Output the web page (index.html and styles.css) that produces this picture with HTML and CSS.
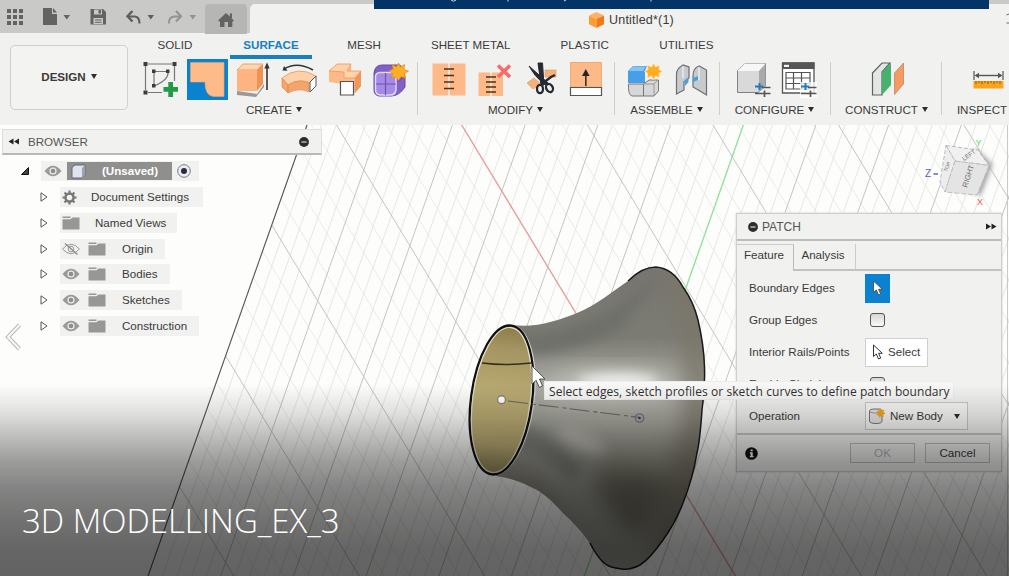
FILE: index.html
```html
<!DOCTYPE html>
<html lang="en">
<head>
<meta charset="utf-8">
<title>Untitled*(1)</title>
<link rel="stylesheet" href="styles.css">
</head>
<body>
<svg class="defs" width="0" height="0">
  <defs>
    <symbol id="eye" viewBox="0 0 18 12"><path d="M0.5 6Q9 -4.500 17.500 6Q9 16.500 0.500 6Z" fill="#9a9a98"/><circle cx="9" cy="6" r="3.600" fill="#e9e9e7"/><circle cx="9" cy="6" r="2.300" fill="#8d8d8b"/></symbol>
    <symbol id="eye-off" viewBox="0 0 18 12"><path d="M0.500 6Q9 -3.500 17.500 6Q9 15.500 0.500 6Z" fill="none" stroke="#9a9a98"/><circle cx="9" cy="6" r="2.800" fill="none" stroke="#9a9a98"/><path d="M3 0.500L15.500 11.500" stroke="#8a8a88" stroke-width="1.300"/></symbol>
    <symbol id="folder" viewBox="0 0 18 14"><path d="M0.500 0.500H8.500V2H0.500ZM0.500 3.200H8.500L10.500 1.500H17.500V13.500H0.500Z" fill="#979795"/></symbol>
    <symbol id="twist" viewBox="0 0 8 10"><path d="M1 0.800L7 5L1 9.200Z" fill="#fff" stroke="#555" stroke-width="1"/></symbol>
    <symbol id="minus" viewBox="0 0 10 10"><circle cx="5" cy="5" r="4.900" fill="#2c2c2c"/><path d="M2.400 5H7.600" stroke="#cfcfcf" stroke-width="1.300"/></symbol>
    <symbol id="arrow" viewBox="0 0 12 16"><path d="M1.500 1V12.500L4.300 10L6.500 15L8.700 14L6.600 9.300H10.300Z"/></symbol>
  </defs>
</svg>
<div class="app">
  <header class="topbar">
    <svg class="ico" width="36" height="33" viewBox="0 0 36 33"><path d="M7 9h4v4h-4zM13 9h4v4h-4zM19 9h4v4h-4zM7 15h4v4h-4zM13 15h4v4h-4zM19 15h4v4h-4zM7 21h4v4h-4zM13 21h4v4h-4zM19 21h4v4h-4z" fill="#636363"/></svg>
    <svg class="ico" width="44" height="33" viewBox="36 0 44 33"><path d="M43 8H52V14H57V25H43ZM53 8L57 12.500H53Z" fill="#636363"/><path d="M63.500 15H70L66.800 19.500Z" fill="#636363"/></svg>
    <svg class="ico" width="36" height="33" viewBox="80 0 36 33"><path d="M90.500 9H103L106 12V24.500H90.500Z" fill="#636363"/><path d="M94 9.500H102V14.500H94Z" fill="#c8c8c8"/><path d="M98.500 10H101V13.500H98.500Z" fill="#636363"/><path d="M93.500 18H103V24H93.500Z" fill="#c8c8c8"/><path d="M95 20H101.500M95 22.300H101.500" stroke="#636363"/></svg>
    <svg class="ico" width="44" height="33" viewBox="116 0 44 33"><path d="M128 16.500H135Q139.500 17 139.500 23.500" fill="none" stroke="#5e5e5e" stroke-width="2.200"/><path d="M132.500 11L127.500 16.300L132.500 21.500" fill="none" stroke="#5e5e5e" stroke-width="2.400"/><path d="M147.500 15H154L150.800 19.500Z" fill="#5e5e5e"/></svg>
    <svg class="ico" width="45" height="33" viewBox="160 0 45 33"><path d="M181 16.500H174Q169 17 168.800 23.500" fill="none" stroke="#929292" stroke-width="1.900"/><path d="M176 11L181 16.300L176 21.500" fill="none" stroke="#929292" stroke-width="2.100"/><path d="M189.500 15H196L192.800 19.500Z" fill="#929292"/></svg>
    <div class="home"><svg class="ico" width="41" height="30" viewBox="205 4 41 30"><path d="M218 20.500L226 13L234 20.500L232.300 21.800V27H228V22H224.500V27H220V21.800Z" fill="#636363"/><path d="M229.800 13.500H232V18H229.800Z" fill="#636363"/></svg></div>
    <div class="doc">
      <svg width="17" height="18" viewBox="0 0 17 18"><path d="M8.500 1L16 4.500L8.500 8L1 4.500Z" fill="#ffb266"/><path d="M1 4.500L8.500 8V17L1 13.300Z" fill="#ff9a35"/><path d="M16 4.500L8.500 8V17L16 13.300Z" fill="#f17a16"/></svg>
      <span>Untitled*(1)</span>
    </div>
    <svg class="banner" width="615" height="9" viewBox="374 0 615 9"><path d="M374 0H989V9H374Z" fill="#023468"/><path d="M451 0Q453.500 2.500 456 0M508 0V1.500M564 1L566 0M651 0V1.500" stroke="#d5dfea" fill="none"/></svg>
    <svg class="edge" width="3" height="12" viewBox="0 0 3 12"><path d="M0.500 2L3 1M0.500 10H3" stroke="#666"/></svg>
  </header>

  <section class="ribbon">
    <button class="design">DESIGN<i class="caret"></i></button>
    <div class="main">
      <nav class="tabs"><span>SOLID</span><span class="on">SURFACE</span><span>MESH</span><span>SHEET METAL</span><span>PLASTIC</span><span>UTILITIES</span></nav>
      <div class="groups">
        <div class="group create">
          <div class="icons">
            <svg viewBox="136 59 46 41"><path d="M148 64H172M145.500 66V90M148 92.500H162M174.500 66V81" stroke="#777" fill="none" stroke-width="1.200"/><path d="M154 71.500H168Q169 80 154 86Z" fill="none" stroke="#777" stroke-width="1.200"/><path d="M143.500 62h4v4h-4zM172.500 62h4v4h-4zM143.500 90.500h4v4h-4zM152 69.500h3.500v3.500h-3.500zM166 69.500h3.500v3.500h-3.500zM152 84h3.500v3.500h-3.500z" fill="#3c3c3c"/><path d="M168.300 82H173V87H178V91.700H173V97H168.300V91.700H163.500V87H168.300Z" fill="#239a45"/></svg>
            <svg viewBox="182 59 46 41"><path d="M187 59H228V100H187Z" fill="#0b82cf"/><path d="M190.500 62.500H224V96.500H214Q205 96 205 82H190.500Z" fill="#fdbb89" stroke="#f2a56a" stroke-width=".6"/></svg>
            <svg viewBox="228 59 46 41"><path d="M237 91L257 94L264 84V87L256 97L237 95Z" fill="#999"/><path d="M237 70L243 64H263L257 70Z" fill="#ffd5b2" stroke="#e99557" stroke-width=".8"/><path d="M237 70H257V91H237Z" fill="#fdb481"/><path d="M257 70L263 64V84L257 91Z" fill="#ef9353"/><path d="M267 90V67" stroke="#333" stroke-width="1.600"/><path d="M264.300 68.500L267 62.500L269.700 68.500Z" fill="#333"/></svg>
            <svg viewBox="274 59 46 41"><path d="M284 69Q297 61 313 70" fill="none" stroke="#333" stroke-width="1.500"/><path d="M282.500 70.500L284 66L287.500 70.800Z" fill="#333"/><path d="M282 78Q298 65 316 76L310 83Q299 78 288 85Z" fill="#ffd0a9" stroke="#e99557" stroke-width=".8"/><path d="M282 78L288 85V93L282 87ZM288 85Q299 78 309 83V92Q299 87 288 93Z" fill="#f5a56c" stroke="#df8b4b" stroke-width=".7"/><path d="M310 82L316 76V86L310 92Z" fill="#fff" stroke="#555"/></svg>
            <svg viewBox="320 59 46 41"><path d="M329 71L337 64H351V71H361V86L355 93H343V84L329 82Z" fill="#fdb987"/><path d="M329 71L337 64H351L347 71H361L355 78H344V72Z" fill="#ffd2ac" stroke="#ea9a60" stroke-width=".8"/><path d="M355 78L361 71V86L355 93Z" fill="#f09858"/><path d="M340.500 81.500H353.500V95H340.500Z" fill="#fff" stroke="#555" stroke-width="1.200"/></svg>
            <svg viewBox="366 59 46 41"><path d="M374 73Q375 65 382 65H400Q405 70 405 80V87Q399 96 391 96H379Q374 95 374 90Z" fill="#8061c8" stroke="#6847ae"/><path d="M375.500 76Q376 73 380 72.500H391Q395.500 73 396 77V90Q395 95 391 95H380Q375.500 94.500 375.500 90Z" fill="#a58be5" stroke="#e1d8fa" stroke-width="1.500"/><path d="M385.500 73V95M376 84H396M397 82L404 77" stroke="#6f50b5" stroke-width="1.200"/><path d="M398.500 63L400.500 67L404.500 64.500L404 69.500L408.500 71L404.500 73.500L405.500 78L401 76.500L398.500 80.500L396 76.500L391.500 78L392.800 73.500L389 71L393.300 69L392 64.500L396.500 67Z" fill="#ffaf21" stroke="#e78a13" stroke-width=".7"/></svg>
          </div>
          <div class="label">CREATE<i class="caret"></i></div>
        </div>
        <div class="group modify">
          <div class="icons">
            <svg viewBox="424 59 46 41"><path d="M431.500 63.500H464.500V95.500H431.500Z" fill="#fdb987"/><path d="M448 63V96" stroke="#fff1df" stroke-width="1.400"/><path d="M443 69H453M443 75.500H453M443 82H453M443 88.500H453" stroke="#443326" stroke-width="1.600"/></svg>
            <svg viewBox="470 59 46 41"><path d="M477.500 72.500H502V96H477.500Z" fill="#fdb987"/><path d="M490 72V96" stroke="#fff1df" stroke-width="1.400"/><path d="M485 77H495M485 82H495M485 87H495M485 92H495" stroke="#443326" stroke-width="1.600"/><path d="M497 65.500L509 77M509 65.500L497 77" stroke="#fb6a6a" stroke-width="3.600"/></svg>
            <svg viewBox="516 59 46 41"><path d="M544 70H555V77H544ZM533 78L540 84L532 89L526 83Z" fill="#f5b17c" stroke="#e39a60" stroke-width=".6"/><path d="M528 66L547 83L544 85Q533 76 528 66ZM537 63H541.500L543 85H540Z" fill="#262b33" stroke="#262b33"/><path d="M542 83L550 77L554 75" stroke="#262b33" stroke-width="2.500"/><ellipse cx="539" cy="89" rx="3" ry="4.200" fill="#f1f1f0" stroke="#262b33" stroke-width="2.300"/><ellipse cx="548.500" cy="88" rx="3.200" ry="4.200" transform="rotate(-30 548.500 88)" fill="#f1f1f0" stroke="#262b33" stroke-width="2.300"/></svg>
            <svg viewBox="562 59 46 41"><path d="M569.500 62.500H600.500V87H569.500Z" fill="#fdb987" stroke="#eeaa75"/><path d="M569.500 87.500H600.500V95.500H569.500Z" fill="#fff" stroke="#555" stroke-width="1.200"/><path d="M584.800 86V74" stroke="#3a302b" stroke-width="1.600"/><path d="M581 76L584.800 69L588.600 76Z" fill="#252525"/></svg>
          </div>
          <div class="label">MODIFY<i class="caret"></i></div>
        </div>
        <div class="group assemble">
          <div class="icons">
            <svg viewBox="621 59 46 41"><path d="M627 71L632 66H646L644 71V83H627Z" fill="#459fe9"/><path d="M628 71L632 66.500H645L642 71Z" fill="#88c5f6"/><path d="M627.500 84H642.500V96H631Q627 95 627.500 84ZM642.500 84L648 80H657.500V91L653 96H642.500Z" fill="#d7d7d7" stroke="#777"/><path d="M642.500 84H653V95M653 84L657 80" fill="none" stroke="#999"/><path d="M652.500 63L654.500 67L658.500 65L658 69.500L661.500 71.500L658 73.500L658.500 78L654.500 76L652.500 80L650.500 76L646 78L646.800 73.500L643.500 71.500L647 69.500L646 65L650.500 67Z" fill="#ffad1e" stroke="#fff1ce" stroke-width=".7"/></svg>
            <svg viewBox="667 59 46 41"><path d="M675.500 75Q675 69 682 65L688 67V78L683 82V90L675.500 94ZM692 76Q692 68 698 66L705.500 70V95L699 91L692 87Z" fill="#c8cbcd" stroke="#6b6f72" stroke-width="1.200"/><path d="M682 66V78M698 67V80" stroke="#eef1f2" stroke-width="1.300"/><path d="M684 80L687.500 77V82L684 86ZM692 78L697 76V80L692 82Z" fill="#4c9fda"/></svg>
          </div>
          <div class="label">ASSEMBLE<i class="caret"></i></div>
        </div>
        <div class="group configure">
          <div class="icons">
            <svg viewBox="729 59 46 41"><path d="M736.500 71L744 63.500H764.500V86L757 92.500H736.500Z" fill="#d9d9d9" stroke="#808080"/><path d="M736.500 71L744 63.500H764.500L758 71Z" fill="#f7f7f7"/><path d="M758 71L764.500 64V86L758 92Z" fill="#aaa"/><path d="M754 86.500H762M758.500 83V90" stroke="#2479bd" stroke-width="2"/><path d="M761 87.500H769.500M754 93.500H769.500M763.500 90.500V97" stroke="#555" stroke-width="1.700"/></svg>
            <svg viewBox="775 59 46 41"><path d="M781.500 63H813V93H781.500Z" fill="#fff" stroke="#565656" stroke-width="1.300"/><path d="M781 62.500H813.500V69H781Z" fill="#565656"/><path d="M783 64.800H788V67H783Z" fill="#f2f2f2"/><path d="M785 72.500H809V89H785ZM785 78H809M785 83.500H809M792.500 72.500V89M800.500 72.500V89" fill="none" stroke="#555" stroke-width="1.200"/><path d="M799 82H816V98H799Z" fill="#fff" opacity=".75"/><path d="M800 86.500H808M804.500 83V90" stroke="#2479bd" stroke-width="2"/><path d="M807 87.500H815.500M800 93.500H815.500M809.500 90.500V97" stroke="#555" stroke-width="1.700"/></svg>
          </div>
          <div class="label">CONFIGURE<i class="caret"></i></div>
        </div>
        <div class="group construct">
          <div class="icons">
            <svg viewBox="863 59 46 41"><path d="M871.500 73L881 63H889L881 72V95H871.500Z" fill="#e4e6e5" stroke="#5d625f" stroke-width="1.200"/><path d="M881 72L890 63V85L881 95Z" fill="#47b26e"/><path d="M893.500 73L902.500 63V84L893.500 94.500Z" fill="#f79a62" stroke="#bb866b" stroke-width=".8"/></svg>
          </div>
          <div class="label">CONSTRUCT<i class="caret"></i></div>
        </div>
        <div class="group inspect">
          <div class="icons">
            <svg viewBox="964 59 46 41"><path d="M973 71V80M1002 71V80" stroke="#555" stroke-width="1.200"/><path d="M975 75.500H1000" stroke="#555" stroke-width="1.400"/><path d="M973.500 75.500L978 72.800V78.200ZM1001.500 75.500L997 72.800V78.200Z" fill="#555"/><path d="M972.500 81H1002.500V88.500H972.500Z" fill="#fba41b"/><path d="M975 81V84M978 81V83M981 81V84M984 81V83M987 81V84M990 81V83M993 81V84M996 81V83M999 81V84" stroke="#8b5710"/></svg>
          </div>
          <div class="label">INSPECT<i class="caret"></i></div>
        </div>
      </div>
    </div>
  </section>

  <main class="canvas">
    <svg class="scene" width="1009" height="451" viewBox="0 125 1009 451">
      <defs>
        <clipPath id="plane"><path d="M307 125H1009V576H148Z"/></clipPath>
        <linearGradient id="metal" gradientUnits="userSpaceOnUse" x1="600" y1="280" x2="600" y2="570"><stop offset="0" stop-color="#777670"/><stop offset=".2" stop-color="#7c7c75"/><stop offset=".36" stop-color="#a9a9a3"/><stop offset=".5" stop-color="#a5a49c"/><stop offset=".75" stop-color="#7d7a6d"/><stop offset="1" stop-color="#a2a29b"/></linearGradient>
        <linearGradient id="gold" x1="0" y1="0" x2="0" y2="1"><stop offset="0" stop-color="#8a7b48"/><stop offset=".15" stop-color="#a39461"/><stop offset=".45" stop-color="#b9aa72"/><stop offset=".8" stop-color="#baab73"/><stop offset="1" stop-color="#97895b"/></linearGradient>
        <filter id="soft" x="-50%" y="-50%" width="200%" height="200%"><feGaussianBlur stdDeviation="12"/></filter>
        <filter id="soft2" x="-50%" y="-80%" width="200%" height="260%"><feGaussianBlur stdDeviation="6"/></filter>
        <clipPath id="body"><path d="M512 325C536 328 557 321 577 313C595 306 613 291 628 281C638 271 647 267 656 267C668 268 676 274 683 287C691 298 695 308 698 320C702 337 704 350 704.500 367C705 383 704 397 702 410C701 425 700 440 697 453C694 471 689 488 683 503C678 516 671 529 663 540C656 550 648 560 640 565C634 568 628 570 622 569C614 568 608 567 603 562C597 556 594 551 590 543C582 532 574 523 563 513C555 504 546 495 537 490C524 483 512 478 496 476Z"/></clipPath>
      </defs>
      <g clip-path="url(#plane)" id="grid"></g>
      <path d="M307 125L148 576" stroke="#555" stroke-width="1.100"/>
      <path d="M461.500 125L735.300 576" stroke="#f29a9b" stroke-width="1.100"/>
      <path d="M743.500 125L584.500 576" stroke="#8dea98" stroke-width="1.100"/>
      <path d="M1007.500 125V576" stroke="#c9c9c8"/>
      <g clip-path="url(#body)">
        <path d="M460 260H710V576H460Z" fill="url(#metal)"/>
        <path d="M665 260Q690 340 685 420L650 560H710V260Z" fill="#7a7669" filter="url(#soft)"/>
        <path d="M510 335Q580 335 640 290L660 275L620 330Q580 350 535 355Z" fill="#6f6f6a" filter="url(#soft2)"/>
        <ellipse cx="612" cy="385" rx="62" ry="14" fill="#c4c4be" filter="url(#soft)"/>
        <ellipse cx="618" cy="381" rx="40" ry="7" fill="#f1f1ee" filter="url(#soft2)"/>
        <path d="M520 415Q580 425 600 480L650 560H600L540 480Z" fill="#969791" filter="url(#soft)"/>
        <path d="M515 420Q550 430 585 470L570 480Q540 450 515 450Z" fill="#7d7e78" filter="url(#soft2)"/>
        <ellipse cx="582" cy="441" rx="26" ry="9" transform="rotate(25 582 441)" fill="#b7b6ae" filter="url(#soft2)"/>
        <path d="M610 470L670 480L640 535Q610 520 595 480Z" fill="#6b685c" filter="url(#soft)"/>
      </g>
      <path d="M628 281C638 271 647 267 656 267C668 268 676 274 683 287C691 298 695 308 698 320C702 337 704 350 704.500 367C705 383 704 397 702 410C701 425 700 440 697 453C694 471 689 488 683 503C678 516 671 529 663 540C656 550 648 560 640 565C634 568 628 570 622 569C614 568 608 567 603 562C597 556 594 551 590 543" fill="none" stroke="#1b1b1b" stroke-width="1.500"/>
      <ellipse cx="502.500" cy="400" rx="32" ry="76" transform="rotate(7.500 502.500 400)" fill="#d9d9d5"/>
      <ellipse cx="501.500" cy="400" rx="30.500" ry="75" transform="rotate(7.500 501.500 400)" fill="url(#gold)" stroke="#111" stroke-width="2.400"/>
      <ellipse cx="501.500" cy="400" rx="28.800" ry="73" transform="rotate(7.500 501.500 400)" fill="none" stroke="#e4e0cf" stroke-width="1.200"/>
      <path d="M482 363Q506 366 531 363" fill="none" stroke="#362f18" stroke-width="1.500"/>
      <path d="M508 401L640 417.500" stroke="#6a675b" stroke-width="1.100" stroke-dasharray="20 4 4 3"/>
      <circle cx="501.500" cy="399.700" r="4" fill="#fff" stroke="#8c8571" stroke-width="1.400"/>
      <circle cx="639.500" cy="418" r="4.200" fill="none" stroke="#716d92" stroke-width="1.300"/><circle cx="639.500" cy="418" r="1.300" fill="#34315f"/>
    </svg>

    <svg class="cube" width="86" height="76" viewBox="920 132 86 76">
      <defs><filter id="cs" x="-40%" y="-40%" width="180%" height="180%"><feGaussianBlur stdDeviation="2.500"/></filter></defs>
      <path d="M975 148L993 164L981 195L962 190Z" fill="#aaa" filter="url(#cs)"/>
      <path d="M946 145.500L978 150L989 165.500L955 161Z" fill="#f0f0f0" stroke="#aaa" stroke-width=".8" stroke-dasharray="4 2"/>
      <path d="M946 145.500L955 161L945 192L940 182Z" fill="#ededed" stroke="#aaa" stroke-width=".8" stroke-dasharray="4 2"/>
      <path d="M955 161L989 165.500L977 195L945 192Z" fill="#e4e4e4" stroke="#b5b5b5" stroke-width=".8" stroke-dasharray="5 2"/>
      <text class="face" transform="translate(967 188) rotate(-72)" font-size="7.500">RIGHT</text>
      <text class="face" transform="translate(964 161) rotate(-35)" font-size="6">LEFT</text>
      <text class="face" transform="translate(947 172) rotate(-68)" font-size="5">TOP</text>
      <text x="925" y="177" font-size="10" fill="#5d55c8">Z</text><path d="M933.500 174H938" stroke="#5b53bf" stroke-width="1.400"/>
      <text x="975.500" y="146" font-size="9" fill="#58d964">Y</text><text x="977" y="205" font-size="9" fill="#f0584f">X</text>
    </svg>

    <aside class="browser">
      <div class="bar"><svg width="11" height="7" viewBox="0 0 11 7"><path d="M5.500 0.500V6.500L0.500 3.500ZM11 0.500V6.500L6 3.500Z" fill="#222"/></svg><span>BROWSER</span><svg class="min" width="10" height="10"><use href="#minus"/></svg></div>
      <div class="tree">
        <div class="row root"><svg class="open" width="8" height="8" viewBox="0 0 8 8"><path d="M7.500 0.500V7.500H0.500Z" fill="#444" stroke="#111"/></svg>
          <div class="chip"><svg width="18" height="12"><use href="#eye"/></svg><div class="name"><svg width="15" height="15" viewBox="0 0 15 15"><path d="M1 3.500L4 1H14V11L11 14H1Z" fill="#e1e4ee" stroke="#646878"/><path d="M11 4L14 1V11L11 14Z" fill="#9da2b6"/></svg><b>(Unsaved)</b></div><svg width="14" height="14" viewBox="0 0 14 14"><circle cx="7" cy="7" r="6.300" fill="#eceef6" stroke="#777a8b"/><circle cx="7" cy="7" r="3" fill="#2c2d38"/></svg></div></div>
        <div class="row"><svg width="8" height="10"><use href="#twist"/></svg><div class="chip w1"><svg width="15" height="15" viewBox="-8 -8 16 16"><circle r="4.300" fill="none" stroke="#777" stroke-width="2.600"/><path d="M0 -7.500V-4M0 4V7.500M-7.500 0H-4M4 0H7.500M-5.300 -5.300L-3 -3M5.300 5.300L3 3M-5.300 5.300L-3 3M5.300 -5.300L3 -3" stroke="#777" stroke-width="2.300"/></svg><span>Document Settings</span></div></div>
        <div class="row"><svg width="8" height="10"><use href="#twist"/></svg><div class="chip w2"><svg width="18" height="14"><use href="#folder"/></svg><span>Named Views</span></div></div>
        <div class="row"><svg width="8" height="10"><use href="#twist"/></svg><div class="chip w3"><svg width="18" height="12"><use href="#eye-off"/></svg><svg width="18" height="14"><use href="#folder"/></svg><span>Origin</span></div></div>
        <div class="row"><svg width="8" height="10"><use href="#twist"/></svg><div class="chip w4"><svg width="18" height="12"><use href="#eye"/></svg><svg width="18" height="14"><use href="#folder"/></svg><span>Bodies</span></div></div>
        <div class="row"><svg width="8" height="10"><use href="#twist"/></svg><div class="chip w5"><svg width="18" height="12"><use href="#eye"/></svg><svg width="18" height="14"><use href="#folder"/></svg><span>Sketches</span></div></div>
        <div class="row"><svg width="8" height="10"><use href="#twist"/></svg><div class="chip w6"><svg width="18" height="12"><use href="#eye"/></svg><svg width="18" height="14"><use href="#folder"/></svg><span>Construction</span></div></div>
      </div>
    </aside>

    <aside class="patch">
      <div class="head"><svg width="10" height="10"><use href="#minus"/></svg><span>PATCH</span><svg class="ff" width="11" height="7" viewBox="0 0 11 7"><path d="M0 0.500L5 3.500L0 6.500ZM5.500 0.500L10.500 3.500L5.500 6.500Z" fill="#222"/></svg></div>
      <div class="ptabs"><span class="on">Feature</span><span class="off">Analysis</span><span class="rest"></span></div>
      <div class="fields">
        <div class="field"><span>Boundary Edges</span><div class="pick"><svg width="12" height="16" fill="#fff" stroke="#555"><use href="#arrow"/></svg></div></div>
        <div class="field"><span>Group Edges</span><i class="check"></i></div>
        <div class="field"><span>Interior Rails/Points</span><div class="select"><svg width="12" height="16" fill="#fff" stroke="#333"><use href="#arrow"/></svg>Select</div></div>
        <div class="field"><span>Enable Chaining</span><i class="check"></i></div>
        <div class="field"><span>Operation</span><div class="combo"><svg width="18" height="18" viewBox="0 0 18 18"><path d="M1.500 4Q1.500 2 6 2H11Q14 2 14 4V14Q14 16.500 8 16.500Q1.500 16.500 1.500 14Z" fill="#e4e4e4" stroke="#777"/><path d="M2 5Q6 7 10 5.500" stroke="#999" fill="none"/><path d="M12.500 1L13.800 3.500L16.500 2.500L15.500 5L17.500 6.500L15.300 7.800L15.500 10L13 9L11.500 11L10.700 8.500L8 8L10 6L9 3.500L11.500 3.500Z" fill="#f5a41c"/></svg><span>New Body</span><i class="caret"></i></div></div>
      </div>
      <div class="foot"><svg width="13" height="13" viewBox="0 0 13 13"><circle cx="6.500" cy="6.500" r="6.300" fill="#111"/><path d="M5.600 2.500H7.700V4.300H5.600ZM4.800 5.300H7.700V9H8.500V10.200H4.800V9H5.600V6.500H4.800Z" fill="#fff"/></svg><button class="ok">OK</button><button>Cancel</button></div>
    </aside>

    <div class="tooltip">Select edges, sketch profiles or sketch curves to define patch boundary</div>
    <svg class="cursor" width="15" height="24" viewBox="0 0 15 24"><path d="M1 1V19L5.200 15.300L8.300 22.500L11.500 21L8.500 14H14Z" fill="#fff" stroke="#444" stroke-width=".9"/></svg>
    <svg class="prev" width="18" height="30" viewBox="0 0 18 30"><path d="M14.500 3L3 15L14.500 27" fill="none" stroke="#b5b5b5" stroke-width="4"/><path d="M14.500 3L3 15L14.500 27" fill="none" stroke="#f7f7f7" stroke-width="2.200"/></svg>
    <div class="shade"></div>
    <h1 class="title">3D MODELLING_EX_3</h1>
  </main>
</div>
<script src="grid.js"></script>
</body>
</html>
```
FILE: grid.js
```js
// Sketch plane grid: two families of parallel lines, every fifth one is a major line.
const grid = document.getElementById("grid");
function family(start, step, count, dx, minor) {
  let thin = "", thick = "";
  for (let i = 0; i < count; i++) {
    const seg = `M${(start + i * step).toFixed(1)} 125l${dx} 451`;
    if (i % 5 === 0) thick += seg; else thin += seg;
  }
  grid.insertAdjacentHTML("afterbegin", `<path d="${thin}" stroke="${minor}" stroke-width="0.9"/>`);
  grid.insertAdjacentHTML("beforeend", `<path d="${thick}" stroke="#c4c4c2" stroke-width="1"/>`);
}
family(307, 14.54, 62, -159, "#e3e3e1");
family(-40, 25.1, 44, 273.8, "#e9e9e7");
```
FILE: styles.css
```css
* { box-sizing: border-box; }
body { margin: 0; width: 1009px; height: 576px; overflow: hidden; font: 11.6px/16px "Liberation Sans", Arial, sans-serif; color: #3a3a3a; }
svg { display: block; flex: none; }
button { font: inherit; color: inherit; padding: 0; }
.defs { position: absolute; }
.app { width: 1009px; height: 576px; display: flex; flex-direction: column; background: #f1f1f0; }

.topbar { position: relative; height: 33px; display: flex; background: #c9c9c8; flex: none; }
.home { width: 42px; margin-top: 4px; height: 30px; background: #b6b6b5; border-radius: 4px 4px 0 0; }
.doc { flex: 1; margin: 4px 0 0 3px; background: #f1f1f0; border-radius: 5px 0 0 0; display: flex; align-items: center; gap: 4px; padding: 0 0 0 338px; height: 32px; font-size: 12.5px; letter-spacing: .2px; }
.banner { position: absolute; left: 374px; top: 0; }
.edge { position: absolute; right: 0; top: 13px; }

.ribbon { height: 92px; flex: none; display: flex; padding-left: 10px; background: #f1f1f0; }
.design { width: 118px; height: 65px; margin-top: 12px; border: 1px solid #cfcfce; border-radius: 5px; background: #f3f3f2; font-weight: bold; display: flex; align-items: center; justify-content: center; padding-bottom: 2px; flex: none; }
.caret { display: inline-block; border: 3.5px solid transparent; border-top: 5px solid #2d2d2d; border-bottom: 0; margin-left: 5px; vertical-align: 2px; }
.label .caret { margin-left: 4px; }
.main { flex: 1; min-width: 0; overflow: hidden; padding-left: 2px; }
.tabs { display: grid; grid-template-columns: 63px 82px 60px 106px 75px 81px; column-gap: 23.6px; padding-left: 13.4px; height: 26px; }
.tabs span { text-align: center; padding-top: 4px; white-space: nowrap; }
.tabs span:nth-child(n+3) { margin-left: -3px; }
.tabs .on { color: #1480c6; font-weight: bold; border-bottom: 4px solid #1a7fc0; }
.groups { display: flex; height: 66px; }
.group { position: relative; flex: none; display: flex; flex-direction: column; align-items: center; }
.group::after { content: ""; position: absolute; right: 0; top: 3px; width: 1px; height: 53px; background: #cdcdcc; }
.create { width: 288px; }
.modify { width: 197px; }
.assemble { width: 105px; }
.configure { width: 111px; }
.construct { width: 111px; }
.inspect { width: 92px; }
.icons { display: flex; height: 41px; }
.icons svg { width: 46px; height: 41px; }
.label { margin-top: 2px; margin-left: -2px; white-space: nowrap; }
.create .label, .construct .label { margin-left: 0; }

.canvas { position: relative; flex: 1; background: #fdfdfc; overflow: hidden; }
.scene { position: absolute; left: 0; top: 0; }
.cube { position: absolute; left: 920px; top: 7px; }
.face { fill: #6d6d6d; }

.browser { position: absolute; left: 2px; top: 4px; width: 320px; }
.bar { height: 26px; background: #f1f1f0; border: 1px solid #ddd; border-bottom: 2px solid #b9b9b8; display: flex; align-items: center; padding: 0 12px 0 5px; gap: 9px; color: #555; }
.bar .min { margin-left: auto; }
.tree { padding-top: 3.6px; }
.row { height: 25.7px; display: flex; align-items: center; padding-left: 38px; gap: 12px; }
.row.root { padding-left: 19px; }
.chip { height: 20px; background: #f1f1f0; display: flex; align-items: center; padding-left: 2px; margin-left: 0; gap: 8px; white-space: nowrap; }
.root .chip { padding: 0 7px 0 3px; gap: 5px; width: 158px; }
.name { width: 105px; height: 18px; background: #8f8f8e; color: #fff; display: flex; align-items: center; padding-left: 4px; gap: 16px; }
.w1 { width: 143px; gap: 14px; } .w2 { width: 117px; gap: 15px; }
.w3 { width: 105px; } .w4 { width: 110px; } .w5 { width: 122px; } .w6 { width: 139px; }
.w3 span, .w4 span, .w5 span, .w6 span { margin-left: 8px; }

.patch { position: absolute; left: 736px; top: 88px; width: 266px; height: 259px; background: #f1f1f0; border: 1px solid #cfcfce; display: flex; flex-direction: column; box-shadow: 0 0 2px #ccc; }
.head { height: 27px; border-bottom: 2px solid #bdbdbc; display: flex; align-items: center; gap: 4px; padding: 0 4px 0 11px; font-size: 12px; color: #555; }
.head .ff { margin-left: auto; }
.ptabs { display: flex; height: 30px; padding-top: 3px; }
.ptabs span { border-bottom: 2px solid #c2c2c1; padding-top: 3px; text-align: center; }
.ptabs .on { width: 57px; border-right: 1px solid #bbb; border-top: 1px solid #ccc; border-bottom: 0; padding: 2px 2px 0 0; }
.ptabs .off { width: 62px; border-right: 1px solid #ccc; padding-right: 3px; }
.ptabs .rest { flex: 1; }
.fields { height: 162px; padding: 1px 0 0 12px; }
.field { height: 32px; display: grid; grid-template-columns: 116px 1fr; align-items: center; white-space: nowrap; }
.pick { width: 25px; height: 29px; background: #0b82cf; display: grid; place-items: center; }
.check { width: 15px; height: 14px; margin-left: 5px; border: 1.5px solid #555; border-radius: 3px; background: linear-gradient(#d6d6d6, #fafafa); }
.select { width: 63px; height: 29px; background: #fff; border: 1px solid #cfcfce; display: flex; align-items: center; padding-left: 6px; gap: 4px; }
.combo { width: 103px; height: 28px; border: 1px solid #c7c7c6; background: #f8f8f7; display: flex; align-items: center; padding-left: 2px; gap: 4px; }
.combo .caret { margin-left: 7px; }
.foot { border-top: 2px solid #c4c4c3; flex: 1; display: flex; align-items: center; padding: 0 11px 0 8px; gap: 10px; }
.foot svg { margin-right: auto; }
.foot button { width: 65px; height: 20px; border: 1.5px solid #bbb; background: #efefee; }
.foot .ok { color: #b0b0b0; }

.tooltip { position: absolute; left: 544px; top: 256px; height: 19px; width: 410px; padding-left: 4px; background: #f7f7f6; font: 12px/19px "Open Sans", "Noto Sans", sans-serif; letter-spacing: .07px; color: #303030; white-space: nowrap; border: 1px solid #ededec; }
.cursor { position: absolute; left: 531px; top: 240px; }
.prev { position: absolute; left: 5px; top: 197px; }
.shade { position: absolute; left: 0; right: 0; top: 259px; bottom: 0; background: linear-gradient(rgba(0,0,0,0), rgba(0,0,0,.12) 30px, rgba(0,0,0,.26) 54px, rgba(0,0,0,.38) 77px, rgba(0,0,0,.48) 103px, rgba(0,0,0,.55) 135px, rgba(0,0,0,.6) 165px, rgba(0,0,0,.61)); }
.title { position: absolute; left: 22px; top: 374px; margin: 0; font: 300 33px/44px "Open Sans", "Noto Sans", sans-serif; color: #fff; white-space: nowrap; }
```
